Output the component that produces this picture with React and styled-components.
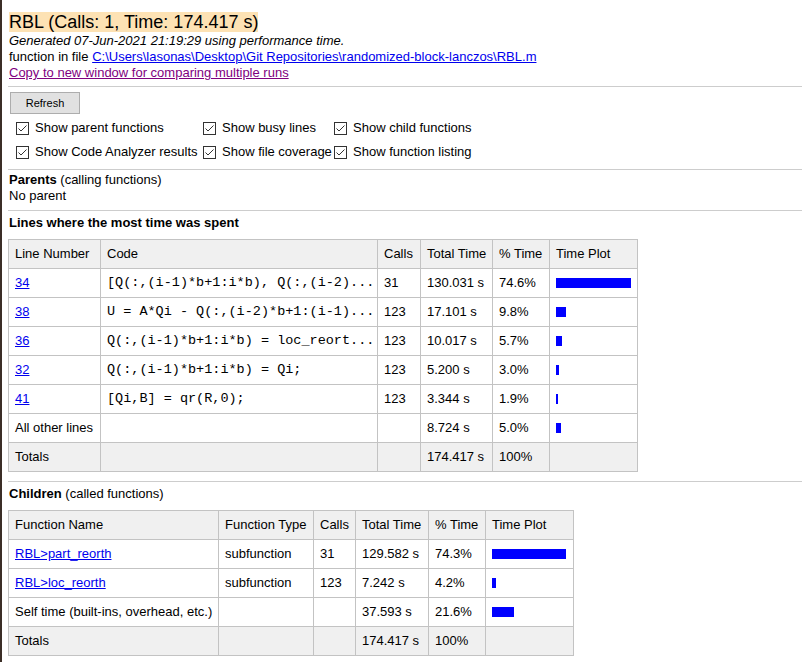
import React from "react";
import styled, { createGlobalStyle } from "styled-components";

const GlobalStyle = createGlobalStyle`
  body {
    margin: 0;
    background: #fff;
    font-family: "Liberation Sans", Arial, sans-serif;
    font-size: 13px;
    color: #000;
  }
`;

const lineRows = [
  { line: 34, code: "[Q(:,(i-1)*b+1:i*b), Q(:,(i-2)...", calls: "31", time: "130.031 s", pct: "74.6%", bar: 75 },
  { line: 38, code: "U = A*Qi - Q(:,(i-2)*b+1:(i-1)...", calls: "123", time: "17.101 s", pct: "9.8%", bar: 10 },
  { line: 36, code: "Q(:,(i-1)*b+1:i*b) = loc_reort...", calls: "123", time: "10.017 s", pct: "5.7%", bar: 6 },
  { line: 32, code: "Q(:,(i-1)*b+1:i*b) = Qi;", calls: "123", time: "5.200 s", pct: "3.0%", bar: 3 },
  { line: 41, code: "[Qi,B] = qr(R,0);", calls: "123", time: "3.344 s", pct: "1.9%", bar: 2 },
];

const childRows = [
  { name: "RBL>part_reorth", type: "subfunction", calls: "31", time: "129.582 s", pct: "74.3%", bar: 74 },
  { name: "RBL>loc_reorth", type: "subfunction", calls: "123", time: "7.242 s", pct: "4.2%", bar: 4 },
];

const options = [
  "Show parent functions",
  "Show busy lines",
  "Show child functions",
  "Show Code Analyzer results",
  "Show file coverage",
  "Show function listing",
];

const Check = () => (
  <svg width="13" height="13" viewBox="0 0 13 13">
    <rect x="0.5" y="0.5" width="12" height="12" fill="#fff" stroke="#333" />
    <polyline points="2.5,6.5 5,9 10.5,3.5" fill="none" stroke="#333" strokeWidth="1" />
  </svg>
);

const App = () => {
  return (
    <Page>
      <GlobalStyle />
      <Title>
        <span>RBL (Calls: 1, Time: 174.417 s)</span>
      </Title>
      <Meta>
        <em>Generated 07-Jun-2021 21:19:29 using performance time.</em>
        <div>
          function in file{" "}
          <Link href="#">
            C:\Users\lasonas\Desktop\Git Repositories\randomized-block-lanczos\RBL.m
          </Link>
        </div>
        <Link href="#" $visited>
          Copy to new window for comparing multiple runs
        </Link>
      </Meta>
      <Rule />
      <Button>Refresh</Button>
      <Options>
        {options.map((o) => (
          <Option key={o}>
            <Check />
            {o}
          </Option>
        ))}
      </Options>
      <Rule $top={5} />
      <Section $top={2}>
        <b>Parents</b> (calling functions)
        <div>No parent</div>
      </Section>
      <Rule $top={6} />
      <Section $top={4}>
        <b>Lines where the most time was spent</b>
      </Section>
      <Table $w={630}>
        <colgroup>
          <Col $w={92} />
          <Col $w={277} />
          <Col $w={43} />
          <Col $w={72} />
          <Col $w={57} />
          <Col $w={88} />
        </colgroup>
        <thead>
          <tr>
            <Th>Line Number</Th>
            <Th>Code</Th>
            <Th>Calls</Th>
            <Th>Total Time</Th>
            <Th>% Time</Th>
            <Th>Time Plot</Th>
          </tr>
        </thead>
        <tbody>
          {lineRows.map((r) => (
            <tr key={r.line}>
              <Td>
                <Link href="#">{r.line}</Link>
              </Td>
              <Code>{r.code}</Code>
              <Td>{r.calls}</Td>
              <Td>{r.time}</Td>
              <Td>{r.pct}</Td>
              <Td>
                <Bar style={{ width: r.bar }} />
              </Td>
            </tr>
          ))}
          <tr>
            <Td>All other lines</Td>
            <Td />
            <Td />
            <Td>8.724 s</Td>
            <Td>5.0%</Td>
            <Td>
              <Bar style={{ width: 5 }} />
            </Td>
          </tr>
          <tr>
            <Td $total>Totals</Td>
            <Td $total />
            <Td $total />
            <Td $total>174.417 s</Td>
            <Td $total>100%</Td>
            <Td $total />
          </tr>
        </tbody>
      </Table>
      <Rule $top={9} />
      <Section $top={4}>
        <b>Children</b> (called functions)
      </Section>
      <Table $w={566}>
        <colgroup>
          <Col $w={210} />
          <Col $w={95} />
          <Col $w={42} />
          <Col $w={73} />
          <Col $w={57} />
          <Col $w={88} />
        </colgroup>
        <thead>
          <tr>
            <Th>Function Name</Th>
            <Th>Function Type</Th>
            <Th>Calls</Th>
            <Th>Total Time</Th>
            <Th>% Time</Th>
            <Th>Time Plot</Th>
          </tr>
        </thead>
        <tbody>
          {childRows.map((r) => (
            <tr key={r.name}>
              <Td>
                <Link href="#">{r.name}</Link>
              </Td>
              <Td>{r.type}</Td>
              <Td>{r.calls}</Td>
              <Td>{r.time}</Td>
              <Td>{r.pct}</Td>
              <Td>
                <Bar style={{ width: r.bar }} />
              </Td>
            </tr>
          ))}
          <tr>
            <Td>Self time (built-ins, overhead, etc.)</Td>
            <Td />
            <Td />
            <Td>37.593 s</Td>
            <Td>21.6%</Td>
            <Td>
              <Bar style={{ width: 22 }} />
            </Td>
          </tr>
          <tr>
            <Td $total>Totals</Td>
            <Td $total />
            <Td $total />
            <Td $total>174.417 s</Td>
            <Td $total>100%</Td>
            <Td $total />
          </tr>
        </tbody>
      </Table>
    </Page>
  );
};

const Page = styled.div`
  min-height: 662px;
  box-sizing: border-box;
  border-left: 2px solid #3b2e27;
  padding: 12px 0 0 6px;
`;

const Title = styled.div`
  font-size: 18px;
  line-height: 21px;
  padding-left: 1px;
  span {
    background: #fde2b4;
  }
`;

const Meta = styled.div`
  line-height: 16px;
  padding-left: 1px;
  em {
    display: block;
  }
`;

const Link = styled.a`
  color: ${(p) => (p.$visited ? "#800080" : "#0000ee")};
  text-decoration: underline;
`;

const Rule = styled.div`
  margin-top: ${(p) => p.$top ?? 5}px;
  border-top: 1px solid #cdcdcd;
`;

const Button = styled.button`
  display: block;
  margin: 5px 0 0 2px;
  width: 70px;
  height: 22px;
  padding: 0;
  background: #e1e1e1;
  border: 1px solid #adadad;
  border-radius: 0;
  font-family: "Liberation Sans", Arial, sans-serif;
  font-size: 11px;
  color: #000;
`;

const Options = styled.div`
  display: grid;
  grid-template-columns: 187px 131px auto;
  grid-auto-rows: 24px;
  margin-top: 2px;
  padding-left: 8px;
`;

const Option = styled.label`
  display: flex;
  align-items: center;
  gap: 6px;
  line-height: 16px;
  white-space: nowrap;
  svg {
    flex: none;
  }
`;

const Section = styled.div`
  margin-top: ${(p) => p.$top}px;
  line-height: 16px;
  padding-left: 1px;
`;

const Table = styled.table`
  margin-top: 8px;
  width: ${(p) => p.$w}px;
  table-layout: fixed;
  border-collapse: collapse;
  border: 1px solid #c3c3c3;
  line-height: 16px;
`;

const Col = styled.col`
  width: ${(p) => p.$w}px;
`;

const Th = styled.th`
  height: 28px;
  box-sizing: border-box;
  padding: 6px 6px;
  border: 1px solid #c3c3c3;
  background: #f0f0f0;
  font-weight: normal;
  text-align: left;
  white-space: nowrap;
`;

const Td = styled.td`
  height: 28px;
  box-sizing: border-box;
  padding: 6px 6px;
  border: 1px solid #c3c3c3;
  background: ${(p) => (p.$total ? "#f0f0f0" : "#fff")};
  white-space: nowrap;
  vertical-align: middle;
`;

const Code = styled(Td)`
  font-family: "Liberation Mono", "Courier New", monospace;
  font-size: 13.5px;
`;

const Bar = styled.div`
  height: 10px;
  background: #0000ff;
`;

export default App;
